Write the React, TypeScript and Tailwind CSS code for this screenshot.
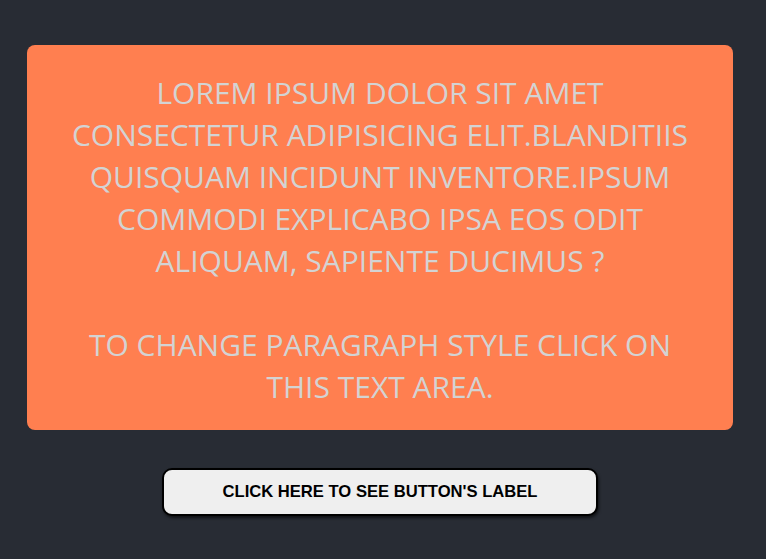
import React from 'react';

const App: React.FC = () => {
    return (
        <div className="min-h-screen w-full bg-[#282c34] flex flex-col items-center pt-[45px] pr-[6px]">
            <div className="w-[706px] rounded-lg bg-[#ff7f50] pt-[27px] pb-[22px] px-2 text-center text-[30px] leading-[42px] text-[#d3d3d3] font-['Open_Sans',sans-serif] uppercase cursor-pointer">
                <p>
                    Lorem ipsum dolor sit amet
                    <br />
                    consectetur adipisicing elit.Blanditiis
                    <br />
                    quisquam incidunt inventore.Ipsum
                    <br />
                    commodi explicabo ipsa eos odit
                    <br />
                    aliquam, sapiente ducimus ?
                </p>
                <p className="mt-[42px]">
                    To change paragraph style click on
                    <br />
                    this text area.
                </p>
            </div>
            <button className="mt-[38px] w-[436px] h-[48px] rounded-[10px] border-2 border-black bg-[#efefef] shadow-[1px_2px_3px_rgba(0,0,0,0.6)] text-[16.6px] font-bold text-black font-['Liberation_Sans',Arial,sans-serif]">
                CLICK HERE TO SEE BUTTON'S LABEL
            </button>
        </div>
    );
};

export default App;
